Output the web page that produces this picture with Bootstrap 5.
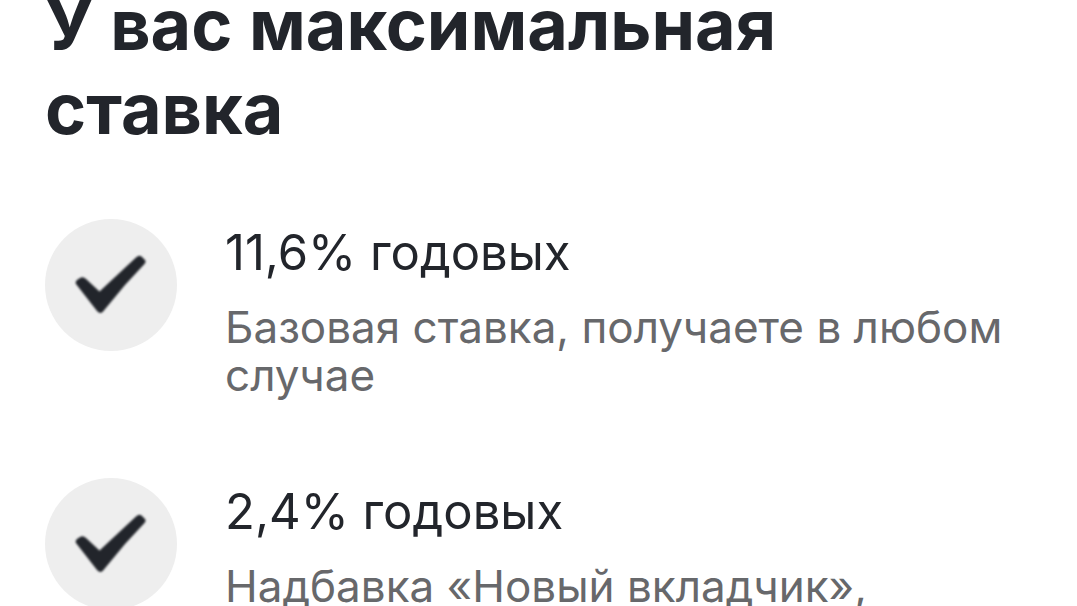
<!DOCTYPE html>
<html lang="ru">
<head>
<meta charset="utf-8">
<meta name="viewport" content="width=device-width, initial-scale=1">
<title>Ставка по вкладу</title>
<link href="https://cdn.jsdelivr.net/npm/bootstrap@5.3.0/dist/css/bootstrap.min.css" rel="stylesheet">
<style>
body{font-family:Inter,"Liberation Sans",sans-serif;color:#22252b;background:#fff}
.rates{padding:0 64px 0 45px;margin-top:-17px}
.rates-title{font-size:70px;line-height:84px;font-weight:700;margin-bottom:68px}
.rate-list{gap:79px}
.rate-item{gap:48px}
.rate-icon{width:132px;height:132px;background:#eee}
.rate-icon path{fill:#22252b;filter:blur(1px)}
.rate-value{font-size:49px;line-height:60px;font-weight:400;margin:4px 0 20px}
.rate-note{font-size:44px;line-height:48px;color:#67686b}
</style>
</head>
<body>
<main class="rates">
<h1 class="rates-title">У вас максимальная ставка</h1>
<ul class="rate-list list-unstyled d-flex flex-column mb-0">
<li class="rate-item d-flex align-items-start">
<span class="rate-icon rounded-circle flex-shrink-0"><svg class="d-block" width="132" height="132" viewBox="0 0 132 132" aria-hidden="true"><path d="M31 65Q30 63 32 61L35 59Q38 57 41 60L54.500 72.500 91 38.500Q94 35.500 96.500 37.500L100 41Q101.500 43 99 45.500L80 66 58.500 92Q55.500 96 52 92Z"/></svg></span>
<div><h2 class="rate-value">11,6% годовых</h2><p class="rate-note mb-0">Базовая ставка, получаете в любом случае</p></div>
</li>
<li class="rate-item d-flex align-items-start">
<span class="rate-icon rounded-circle flex-shrink-0"><svg class="d-block" width="132" height="132" viewBox="0 0 132 132" aria-hidden="true"><path d="M31 65Q30 63 32 61L35 59Q38 57 41 60L54.500 72.500 91 38.500Q94 35.500 96.500 37.500L100 41Q101.500 43 99 45.500L80 66 58.500 92Q55.500 96 52 92Z"/></svg></span>
<div><h2 class="rate-value">2,4% годовых</h2><p class="rate-note mb-0">Надбавка «Новый вкладчик»,</p></div>
</li>
</ul>
</main>
<script src="https://cdn.jsdelivr.net/npm/bootstrap@5.3.0/dist/js/bootstrap.bundle.min.js"></script>
</body>
</html>
